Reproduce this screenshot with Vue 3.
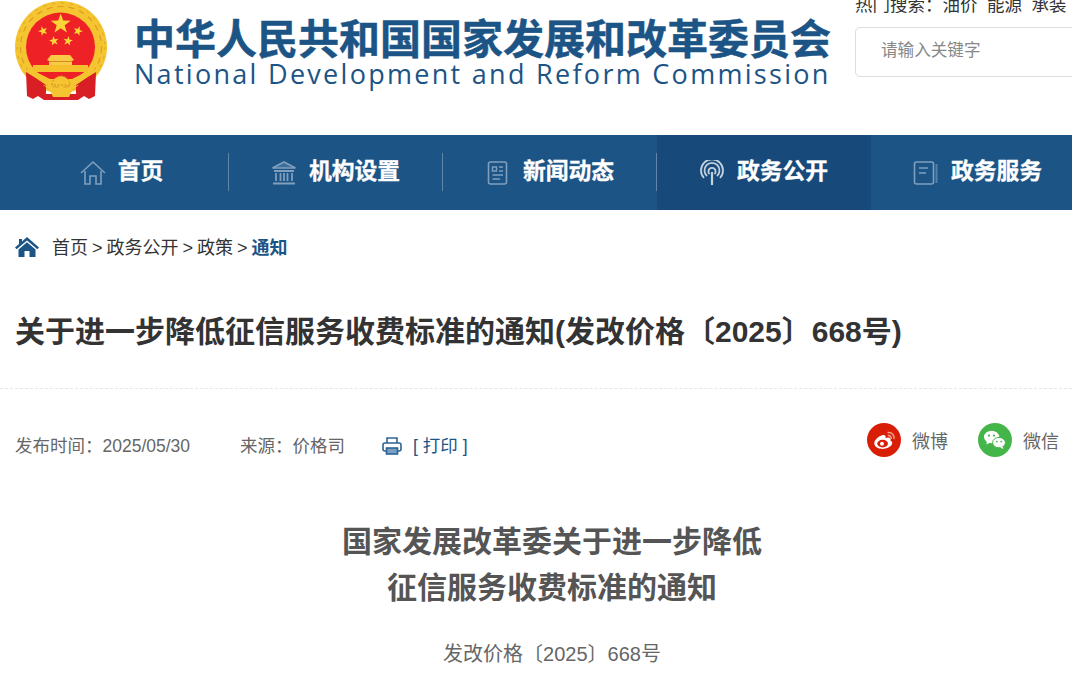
<script setup>
const navItems = [
  { label: "首页", icon: "home" },
  { label: "机构设置", icon: "bank" },
  { label: "新闻动态", icon: "news" },
  { label: "政务公开", icon: "signal", active: true },
  { label: "政务服务", icon: "book" }
];

const hotWords = ["油价", "能源", "承装"];

// small stars on the emblem
const stars = [
  { x: 43, y: 31, a: -20 },
  { x: 78, y: 31, a: 20 },
  { x: 54, y: 41, a: -10 },
  { x: 68, y: 41, a: 10 }
];

function starPoints(r) {
  const pts = [];
  for (let i = 0; i < 10; i++) {
    const rad = i % 2 === 0 ? r : r * 0.4;
    const ang = (Math.PI / 5) * i - Math.PI / 2;
    pts.push((rad * Math.cos(ang)).toFixed(2) + "," + (rad * Math.sin(ang)).toFixed(2));
  }
  return pts.join(" ");
}
</script>

<template>
  <div class="page">
    <header class="header">
      <svg class="emblem" width="94" height="102" viewBox="15 0 94 102">
        <circle cx="61" cy="47" r="46" fill="#f5c431" />
        <circle cx="61" cy="47" r="40.5" fill="none" stroke="#dc9f22" stroke-width="1.2" stroke-dasharray="6 5" />
        <circle cx="61" cy="47" r="44" fill="none" stroke="#e0a826" stroke-width="1" stroke-dasharray="3 6" />
        <circle cx="60.5" cy="47" r="34.5" fill="#ee2127" />
        <polygon :points="starPoints(10.5)" transform="translate(60.7 24)" fill="#fbd436" />
        <polygon v-for="s in stars" :key="s.x" :points="starPoints(5)" :transform="`translate(${s.x} ${s.y}) rotate(${s.a})`" fill="#fbd436" />
        <path d="M47 60 L51 55 H70 L74 60 L72 61 V65 H49 V61 Z" fill="#f8ca45" />
        <path d="M49 61.5 H72" stroke="#d98a1c" stroke-width="1" />
        <path d="M33 65 H88 V72 H33 Z" fill="#f6c02c" />
        <path d="M26 72 L46 84 V93 L44 100 L38 96 L33 99 L27 96 Z" fill="#d81f26" />
        <path d="M96 72 L76 84 V93 L78 100 L84 96 L89 99 L95 96 Z" fill="#d81f26" />
        <path d="M44 94 H78 V100 H44 Z" fill="#d81f26" />
        <path d="M28 66 L36 72 L50 79 H72 L86 72 L94 66 L95 72 L76 85 H46 L27 72 Z" fill="#f5c431" />
        <path d="M52 85 A9 9 0 0 1 70 85 Z" fill="#f5c431" stroke="#d08c1c" stroke-width="1" stroke-dasharray="2 1.5" />
        <path d="M43 85 Q61 91 79 85 L72 90 L69 97 H53 L50 90 Z" fill="#f5c431" />
      </svg>
      <div class="brand">
        <div class="brand-cn">中华人民共和国国家发展和改革委员会</div>
        <div class="brand-en">National Development and Reform Commission</div>
      </div>
      <div class="tools">
        <div class="hot">
          热门搜索：<span v-for="w in hotWords" :key="w" class="hot-word">{{ w }}</span>
        </div>
        <div class="search">请输入关键字</div>
      </div>
    </header>

    <nav class="nav">
      <a v-for="item in navItems" :key="item.label" class="nav-item" :class="{ active: item.active }">
        <svg class="nav-icon" width="26" height="26" viewBox="0 0 26 26" fill="none" stroke="#7f9fbd" stroke-width="1.6">
          <template v-if="item.icon === 'home'">
            <path d="M1 13 L13 2 L25 13" />
            <path d="M5 11 V24 H10 V16 H16 V24 H21 V11" />
          </template>
          <template v-else-if="item.icon === 'bank'">
            <path d="M1.5 8 L13 2 L24.5 8 Z" fill="#7f9fbd" fill-opacity="0.35" />
            <path d="M3 11 H23 M5 13 V21 M9.5 13 V21 M13 13 V21 M16.5 13 V21 M21 13 V21 M2 23.5 H24" stroke-width="1.8" />
          </template>
          <template v-else-if="item.icon === 'news'">
            <rect x="3.5" y="2" width="18" height="22" rx="2" />
            <path d="M7.5 7 H11.5 V11 H7.5 Z M14 7 H18 M14 11 H18 M7.5 15 H18 M7.5 19 H15" stroke-width="1.4" />
          </template>
          <template v-else-if="item.icon === 'signal'">
            <path d="M5 18 A11 11 0 1 1 21 18" stroke="#c3d1de" stroke-width="1.8" />
            <path d="M8 16 A7.5 7.5 0 1 1 18 16" stroke="#c3d1de" stroke-width="1.8" />
            <path d="M10.5 14 A3.6 3.6 0 1 1 15.5 14" stroke="#c3d1de" stroke-width="1.8" />
            <path d="M13 12 V25" stroke="#c3d1de" stroke-width="2.2" />
          </template>
          <template v-else>
            <rect x="1.5" y="2" width="19" height="22" rx="2" />
            <path d="M6 8 H15 M6 13 H13" />
            <path d="M23.5 4 V23" stroke-width="2" opacity="0.6" />
          </template>
        </svg>
        <span class="nav-label">{{ item.label }}</span>
      </a>
    </nav>

    <div class="crumbs">
      <svg width="24" height="20" viewBox="0 0 24 20">
        <path d="M12 0 L24 10.5 L22.4 12.2 L12 3.4 L1.6 12.2 L0 10.5 L4 7 V2 H7 V4.4 Z" fill="#1c5486" />
        <path d="M12 5.2 L20.5 12.4 V20 H14.5 V14 H9.5 V20 H3.5 V12.4 Z" fill="#1c5486" />
      </svg>
      <span class="crumb-text">首页 &gt; 政务公开 &gt; 政策 &gt; <b>通知</b></span>
    </div>

    <h1 class="title">关于进一步降低征信服务收费标准的通知(发改价格〔2025〕668号)</h1>

    <div class="meta">
      <span class="date">发布时间：2025/05/30</span>
      <span class="source">来源：价格司</span>
      <svg class="printer" width="20" height="18" viewBox="0 0 20 18" fill="none" stroke="#2b6494" stroke-width="1.6">
        <path d="M5 6 V1 H15 V6" />
        <rect x="1" y="6" width="18" height="8" rx="2" />
        <rect x="4.5" y="11" width="11" height="6" fill="#7b9fc0" />
      </svg>
      <span class="print">[ 打印 ]</span>
      <div class="share">
        <span class="share-item">
          <svg width="34" height="34" viewBox="0 0 34 34">
            <circle cx="17" cy="17" r="17" fill="#d81e06" />
            <path d="M14.5 12.5 C9.5 14.5 6.5 18.5 7.5 21.5 C9 26 16 27 21 24.8 C25.5 22.8 26.6 19 23.4 17.6 C24.6 14.6 21.8 13.8 18.6 15 C19.2 12.2 17.4 11.4 14.5 12.5 Z" fill="#fff" />
            <ellipse cx="15.6" cy="20.6" rx="5.4" ry="3.8" fill="#d81e06" />
            <circle cx="15" cy="20.8" r="2" fill="#fff" />
            <path d="M20.5 9.5 C24.5 8.8 27.8 12 27 16 M20.8 12.6 C23 12.2 24.6 13.8 24.2 15.8" fill="none" stroke="#f6a58f" stroke-width="1.5" />
          </svg>
          微博
        </span>
        <span class="share-item">
          <svg width="34" height="34" viewBox="0 0 34 34">
            <circle cx="17" cy="17" r="17" fill="#44b549" />
            <ellipse cx="13.6" cy="14" rx="7.6" ry="6.2" fill="#fff" />
            <path d="M9 18 L8.4 21.4 L12.4 19.4 Z" fill="#fff" />
            <ellipse cx="21" cy="19.6" rx="6.4" ry="5.2" fill="#fff" stroke="#44b549" stroke-width="1" />
            <path d="M24.4 23.4 L25.4 26 L22 24.4 Z" fill="#fff" />
            <circle cx="11" cy="12.6" r="1.1" fill="#44b549" />
            <circle cx="16" cy="12.6" r="1.1" fill="#44b549" />
            <circle cx="18.8" cy="18.6" r="0.9" fill="#44b549" />
            <circle cx="23.2" cy="18.6" r="0.9" fill="#44b549" />
          </svg>
          微信
        </span>
      </div>
    </div>

    <article class="article">
      <h2 class="article-title">国家发展改革委关于进一步降低<br />征信服务收费标准的通知</h2>
      <p class="doc-no">发改价格〔2025〕668号</p>
    </article>
  </div>
</template>

<style>
html,
body {
  margin: 0;
  overflow: hidden;
  background: #fff;
}
</style>

<style scoped>
.page {
  width: 1072px;
  height: 685px;
  overflow: hidden;
  font-family: "Liberation Sans", "Noto Sans CJK SC", sans-serif;
  color: #333;
}

.header {
  display: flex;
  height: 135px;
  padding-left: 15px;
}

.emblem {
  flex: none;
}

.brand {
  flex: none;
  width: 706px;
  margin-left: 25px;
  color: #1c5486;
  padding-top: 17px;
}

.brand-cn {
  font-size: 41px;
  line-height: 46px;
  font-weight: 700;
  -webkit-text-stroke: 0.5px #1c5486;
  white-space: nowrap;
}

.brand-en {
  font-family: "Open Sans", sans-serif;
  font-size: 27px;
  line-height: 22px;
  letter-spacing: 2.29px;
  white-space: nowrap;
}

.tools {
  flex: none;
  margin-left: 15px;
  margin-top: -7px;
}

.hot {
  font-size: 17.5px;
  line-height: 24px;
  color: #333;
  white-space: nowrap;
}

.hot-word {
  margin-right: 9.5px;
}

.search {
  box-sizing: border-box;
  width: 300px;
  height: 50px;
  margin-top: 10px;
  padding-left: 25px;
  border: 1px solid #ddd;
  border-radius: 5px;
  font-size: 16.6px;
  line-height: 46px;
  color: #888;
}

.nav {
  display: flex;
  height: 75px;
  padding-left: 15px;
  background: #1c5486;
}

.nav-item {
  flex: none;
  position: relative;
  box-sizing: border-box;
  width: 214px;
  padding-right: 1px;
  display: flex;
  align-items: center;
  justify-content: center;
  gap: 12px;
  color: #fff;
}

.nav-item:not(:last-child)::after {
  content: "";
  position: absolute;
  right: 0;
  top: 18px;
  height: 38px;
  width: 1px;
  background: #5f87aa;
}

.nav-item.active {
  background: #174a7a;
}

.nav-item.active::after {
  display: none;
}

.nav-label {
  margin-bottom: 6px;
  font-size: 22.8px;
  font-weight: 700;
  -webkit-text-stroke: 0.3px #fff;
  white-space: nowrap;
}

.crumbs {
  display: flex;
  align-items: center;
  height: 66px;
  padding: 4px 0 0 15px;
  font-size: 18px;
  gap: 13px;
}

.crumb-text {
  word-spacing: -1px;
  margin-bottom: 2px;
}

.crumb-text b {
  color: #1c5486;
}

.title {
  margin: 0;
  padding: 29px 0 33px 15px;
  font-size: 30px;
  line-height: 46px;
  font-weight: 700;
  color: #333;
  white-space: nowrap;
  border-bottom: 1px dashed #e6e6e6;
}

.meta {
  display: flex;
  align-items: center;
  height: 110px;
  padding-left: 15px;
  font-size: 17.5px;
  color: #666;
  position: relative;
}

.source {
  margin-left: 50px;
}

.printer {
  margin-left: 37px;
  margin-top: 3px;
}

.print {
  margin-left: 11px;
  color: #1c5486;
}

.share {
  position: absolute;
  left: 867px;
  top: 34px;
  display: flex;
  gap: 30px;
  font-size: 18px;
}

.share-item {
  display: flex;
  align-items: center;
  gap: 11px;
  white-space: nowrap;
}

.article {
  width: 1074px;
  margin-left: 15px;
  text-align: center;
}

.article-title {
  margin: 0;
  padding-top: 20px;
  font-size: 30px;
  line-height: 46px;
  font-weight: 700;
  color: #555;
}

.doc-no {
  margin: 28px 0 0;
  font-size: 20px;
  line-height: 30px;
  color: #666;
}
</style>
